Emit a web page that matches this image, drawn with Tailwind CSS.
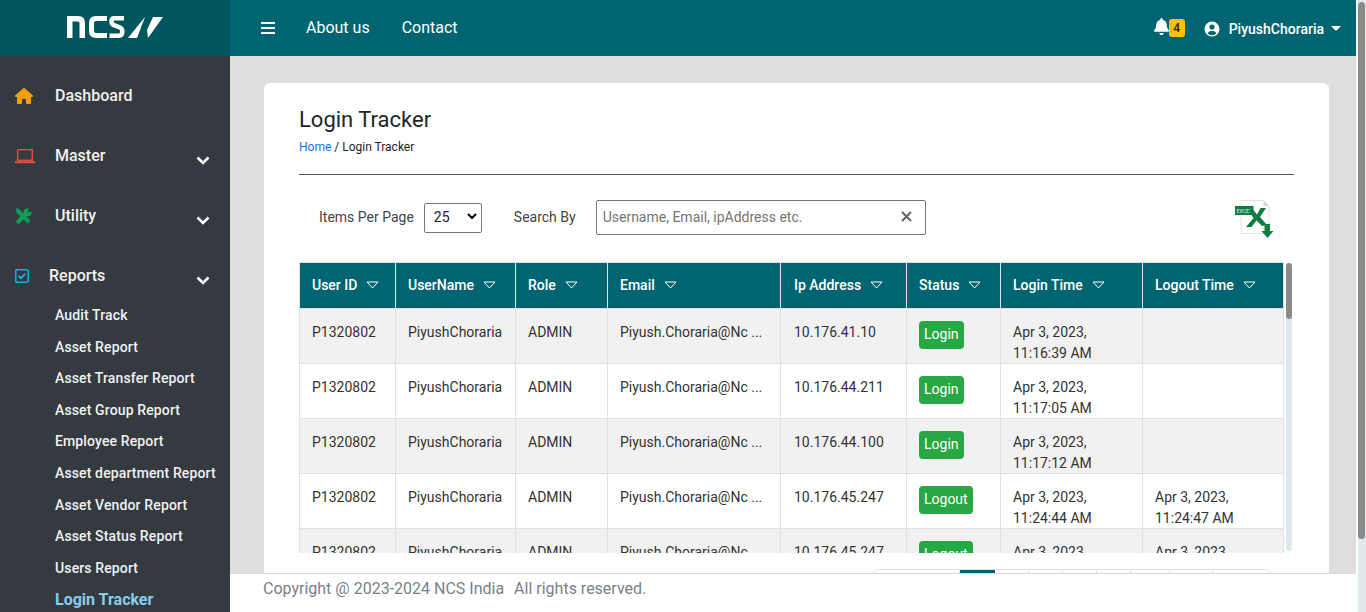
<!DOCTYPE html>
<html>
<head>
<meta charset="utf-8">
<script src="https://cdn.jsdelivr.net/npm/@tailwindcss/browser@4"></script>
<title>Login Tracker</title>
</head>
<body class="h-[612px] w-[1366px] overflow-hidden bg-white font-['Roboto',sans-serif] text-[#212529]">
<div class="flex h-[612px]">
  <!-- sidebar -->
  <aside class="w-[230px] shrink-0 bg-[#343a40] text-[#f1f1f1]">
    <div class="flex h-[56px] items-center justify-center bg-[#00565f]">
      <svg width="98" height="24" viewBox="0 0 98 24" class="-mt-[2px]" fill="none" stroke="#fff">
        <path d="M3.750 23V3.750H12Q16.250 3.750 16.250 8V23" stroke-width="5.500"/>
        <path d="M41 3.500H30Q25.500 3.500 25.500 8V16Q25.500 20.500 30 20.500H41" stroke-width="5"/>
        <path d="M58 3.250H48Q45.500 3.250 45.500 6.500Q45.500 9.500 48.500 10.300L54 12.500Q56.300 13.500 56.300 16.500Q56.300 20.750 53 20.750H43.500" stroke-width="4.500"/>
        <path d="M62 23L79 2L71 23Z" fill="#fff" stroke="none"/>
        <path d="M97 2H87L81 15L82 23Z" fill="#fff" stroke="none"/>
      </svg>
    </div>
    <nav class="pt-[10px] text-base font-medium">
      <div class="flex h-[60px] items-center pl-[15px]">
        <svg width="18" height="16" viewBox="0 0 576 512" fill="#f59e0b" class="mr-[22px]"><path d="M575.800 255.500c0 18-15 32.100-32 32.100h-32l.7 160.200c0 2.700-.2 5.400-.5 8.100V472c0 22.100-17.900 40-40 40H456c-1.100 0-2.200 0-3.300-.1-1.400.1-2.800.1-4.200.1H416 392c-22.100 0-40-17.900-40-40V448 384c0-17.700-14.300-32-32-32H256c-17.700 0-32 14.300-32 32v64 24c0 22.100-17.900 40-40 40H160 128.100c-1.500 0-3-.1-4.500-.2-1.200.1-2.400.2-3.600.2H104c-22.100 0-40-17.900-40-40V360c0-.9 0-1.900.1-2.800V287.600H32c-18 0-32-14-32-32.100 0-9 3-17 10-24L266.400 8c7-7 15-8 22-8s15 2 21 7L564.800 231.500c8 7 12 15 11 24z"/></svg>
        <span>Dashboard</span>
      </div>
      <div class="relative flex h-[60px] items-center pl-[15px]">
        <svg width="20" height="16" viewBox="0 0 20 16" fill="none" stroke="#dc4c3e" stroke-width="1.500" class="mr-[20px]"><rect x="2.700" y="1.700" width="14.600" height="10.600"/><path d="M0 14.200H20" stroke-width="2.200"/></svg>
        <span>Master</span>
        <svg width="14" height="9" viewBox="0 0 14 9" fill="none" stroke="#fff" stroke-width="2.500" class="absolute left-[196px] top-[30px]"><path d="M1.500 1.500L7 7L12.500 1.500"/></svg>
      </div>
      <div class="relative flex h-[60px] items-center pl-[15px]">
        <svg width="17" height="17" viewBox="0 0 17 17" fill="none" class="mr-[23px]">
          <path d="M2.500 2.500L14 14" stroke="#0f9d58" stroke-width="4"/>
          <path d="M1 0L5 1.500L5.500 5L1.500 5.500Z" fill="#0f9d58"/>
          <path d="M12 5L3.500 13.500" stroke="#0f9d58" stroke-width="4.500" stroke-linecap="round"/>
          <circle cx="12.500" cy="4.500" r="4" fill="#0f9d58"/>
          <path d="M12.500 4.500L14 0H18V3Z" fill="#343a40"/>
        </svg>
        <span>Utility</span>
        <svg width="14" height="9" viewBox="0 0 14 9" fill="none" stroke="#fff" stroke-width="2.500" class="absolute left-[196px] top-[30px]"><path d="M1.500 1.500L7 7L12.500 1.500"/></svg>
      </div>
      <div class="relative flex h-[60px] items-center pl-[15px]">
        <svg width="14" height="14" viewBox="0 0 14 14" fill="none" class="mr-[20px]"><rect x="0.750" y="0.750" width="12.500" height="12.500" rx="1" stroke="#0fb4e6" stroke-width="1.500"/><path d="M3.800 7L6 9.200L10.300 4.800" stroke="#0fb4e6" stroke-width="1.800"/></svg>
        <span>Reports</span>
        <svg width="14" height="9" viewBox="0 0 14 9" fill="none" stroke="#fff" stroke-width="2.500" class="absolute left-[196px] top-[30px]"><path d="M1.500 1.500L7 7L12.500 1.500"/></svg>
      </div>
      <ul class="-mt-[6px] pl-[55px] text-sm leading-[31.600px] tracking-[0.13px]">
        <li>Audit Track</li>
        <li>Asset Report</li>
        <li>Asset Transfer Report</li>
        <li>Asset Group Report</li>
        <li>Employee Report</li>
        <li>Asset department Report</li>
        <li>Asset Vendor Report</li>
        <li>Asset Status Report</li>
        <li>Users Report</li>
        <li class="text-base leading-[31.600px] font-bold tracking-normal text-[#87ceeb]">Login Tracker</li>
      </ul>
    </nav>
  </aside>

  <!-- right column -->
  <div class="flex w-[1126px] shrink-0 flex-col">
    <header class="flex h-[56px] shrink-0 items-center bg-[#006570] text-white">
      <svg width="14" height="12" viewBox="0 0 14 12" fill="#fff" class="ml-[31px]"><rect width="14" height="2" rx="0.500"/><rect y="5" width="14" height="2" rx="0.500"/><rect y="10" width="14" height="2" rx="0.500"/></svg>
      <span class="ml-[31px] text-base">About us</span>
      <span class="ml-[32px] text-base">Contact</span>
      <div class="ml-auto mr-[15px] mt-[1px] flex items-center">
        <svg width="15" height="17" viewBox="0 0 448 512" fill="#fff" class="-mt-[5px]"><path d="M224 0c-17.700 0-32 14.300-32 32V51.200C119 66 64 130.600 64 208v18.800c0 47-17.300 92.400-48.500 127.600l-7.400 8.300c-8.400 9.400-10.400 22.900-5.300 34.400S19.400 416 32 416H416c12.600 0 24-7.400 29.200-18.900s3.100-25-5.300-34.400l-7.400-8.300C401.300 319.200 384 273.900 384 226.800V208c0-77.400-55-142-128-156.800V32c0-17.700-14.300-32-32-32zm45.300 493.300c12-12 18.700-28.300 18.700-45.300H224 160c0 17 6.700 33.300 18.700 45.300s28.300 18.700 45.300 18.700s33.300-6.700 45.300-18.700z"/></svg>
        <span class="-mt-[1px] flex h-[18px] w-[16px] items-center justify-center rounded-[3px] bg-[#ffc107] text-xs font-medium text-[#212529]">4</span>
        <svg width="16" height="16" viewBox="0 0 16 16" class="ml-[19px]"><circle cx="8" cy="8" r="7.500" fill="#fff"/><circle cx="8" cy="6" r="2.600" fill="#006570"/><path d="M3.500 12.300C4.500 10.500 6 10 8 10S11.500 10.500 12.500 12.300C11.300 13.500 9.800 14.200 8 14.200S4.700 13.500 3.500 12.300Z" fill="#006570"/></svg>
        <span class="ml-[9px] text-sm font-medium">PiyushChoraria</span>
        <svg width="10" height="5" viewBox="0 0 10 5" fill="#fff" class="ml-[7px]"><path d="M0 0H10L5 5Z"/></svg>
      </div>
    </header>

    <main class="min-h-0 flex-1 overflow-hidden bg-[#dedede] pl-[34px] pr-[27px] pt-[27px]">
      <section class="h-[600px] rounded-[6px] bg-white pl-[35px] pr-[35px]">
        <h1 class="pt-[23px] text-[22px] leading-[28px] text-[#212529]">Login Tracker</h1>
        <p class="mt-[6px] text-xs leading-[14px]"><span class="text-[#0d6efd]">Home</span> / Login Tracker</p>
        <div class="mt-[20px] border-t border-[#555]"></div>

        <div class="relative flex h-[87px] items-center pb-[2px] pl-[20px] text-sm text-[#444]">
          <span class="-mt-[2px]">Items Per Page</span>
          <span class="ml-[10px] flex h-[30px] w-[58px] items-center justify-between rounded-[2px] border border-[#767676] pb-[2px] pl-[9px] pr-[4px] text-[#212529]">25
            <svg width="10" height="7" viewBox="0 0 10 7" fill="none" stroke="#000" stroke-width="2"><path d="M1 1L5 5L9 1"/></svg>
          </span>
          <span class="-mt-[2px] ml-[32px]">Search By</span>
          <span class="ml-[20px] flex h-[35px] w-[330px] items-center justify-between rounded-[2px] border border-[#767676] pb-[2px] pl-[6px] pr-[13px] text-[#757575]">Username, Email, ipAddress etc.
            <svg width="11" height="11" viewBox="0 0 11 11" fill="none" stroke="#666" stroke-width="2"><path d="M1 1L10 10M10 1L1 10"/></svg>
          </span>
          <svg width="40" height="40" viewBox="0 0 40 40" class="absolute left-[935px] top-[24px]">
            <path d="M7 1.500H29.500L35 7V34.500H7Z" fill="#fff" stroke="#e4e4e4" stroke-width="1"/>
            <path d="M29.500 1.500V7H35Z" fill="#d5d5d5"/>
            <rect x="1" y="7" width="18.500" height="9" fill="#107c41"/>
            <text x="2.500" y="13.500" font-size="5.200" font-family="Roboto" fill="#dff0e6">EXCEL</text>
            <path d="M12 28L19.500 19L14 11H19.500L23 15.500L26.500 9H32L26 18L33 26L28 27L22.500 21.500L17.500 28Z" fill="#107c41"/>
            <path d="M30.500 25H36V32H39.500L33.500 39L27.500 32H30.500Z" fill="#107c41"/>
          </svg>
        </div>

        <div class="flex h-[291px] items-start">
          <div class="h-[291px] w-[985px] shrink-0 overflow-hidden">
            <table class="w-[984px] table-fixed border-collapse text-sm">
              <colgroup><col class="w-[96px]"><col class="w-[120px]"><col class="w-[92px]"><col class="w-[173px]"><col class="w-[126px]"><col class="w-[94px]"><col class="w-[142px]"><col class="w-[141px]"></colgroup>
              <thead class="bg-[#006570] font-medium text-white">
                <tr class="h-[46px]">
                  <th class="border border-[#dee2e6] pb-[2px] pl-[12px] text-left font-medium"><span class="inline-flex items-center">User ID<svg width="13" height="8" viewBox="0 0 13 8" fill="none" stroke="#fff" class="ml-[9px]"><path d="M1 1H12L6.500 7Z"/></svg></span></th>
                  <th class="border border-[#dee2e6] pb-[2px] pl-[12px] text-left font-medium"><span class="inline-flex items-center">UserName<svg width="13" height="8" viewBox="0 0 13 8" fill="none" stroke="#fff" class="ml-[9px]"><path d="M1 1H12L6.500 7Z"/></svg></span></th>
                  <th class="border border-[#dee2e6] pb-[2px] pl-[12px] text-left font-medium"><span class="inline-flex items-center">Role<svg width="13" height="8" viewBox="0 0 13 8" fill="none" stroke="#fff" class="ml-[9px]"><path d="M1 1H12L6.500 7Z"/></svg></span></th>
                  <th class="border border-[#dee2e6] pb-[2px] pl-[12px] text-left font-medium"><span class="inline-flex items-center">Email<svg width="13" height="8" viewBox="0 0 13 8" fill="none" stroke="#fff" class="ml-[9px]"><path d="M1 1H12L6.500 7Z"/></svg></span></th>
                  <th class="border border-[#dee2e6] pb-[2px] pl-[13px] text-left font-medium"><span class="inline-flex items-center">Ip Address<svg width="13" height="8" viewBox="0 0 13 8" fill="none" stroke="#fff" class="ml-[9px]"><path d="M1 1H12L6.500 7Z"/></svg></span></th>
                  <th class="border border-[#dee2e6] pb-[2px] pl-[12px] text-left font-medium"><span class="inline-flex items-center">Status<svg width="13" height="8" viewBox="0 0 13 8" fill="none" stroke="#fff" class="ml-[9px]"><path d="M1 1H12L6.500 7Z"/></svg></span></th>
                  <th class="border border-[#dee2e6] pb-[2px] pl-[12px] text-left font-medium"><span class="inline-flex items-center">Login Time<svg width="13" height="8" viewBox="0 0 13 8" fill="none" stroke="#fff" class="ml-[9px]"><path d="M1 1H12L6.500 7Z"/></svg></span></th>
                  <th class="border border-[#dee2e6] pb-[2px] pl-[12px] text-left font-medium"><span class="inline-flex items-center">Logout Time<svg width="13" height="8" viewBox="0 0 13 8" fill="none" stroke="#fff" class="ml-[9px]"><path d="M1 1H12L6.500 7Z"/></svg></span></th>
                </tr>
              </thead>
              <tbody class="leading-[21px] text-[#333]">
                <tr class="h-[55px] bg-[#f1f1f1] align-top">
                  <td class="border border-[#dee2e6] px-[12px] pt-[13px]">P1320802</td><td class="border border-[#dee2e6] px-[12px] pt-[13px]">PiyushChoraria</td><td class="border border-[#dee2e6] px-[12px] pt-[13px]">ADMIN</td><td class="border border-[#dee2e6] px-[12px] pt-[13px] whitespace-nowrap">Piyush.Choraria@Nc ...</td><td class="border border-[#dee2e6] pl-[13px] pr-[11px] pt-[13px]">10.176.41.10</td>
                  <td class="border border-[#dee2e6] px-[12px] pt-[12px]"><span class="inline-block h-[28px] rounded-[4px] bg-[#28a745] px-[5px] leading-[26px] text-white">Login</span></td>
                  <td class="border border-[#dee2e6] px-[12px] pt-[13px]"><div class="-mb-[2px]">Apr 3, 2023,<br>11:16:39 AM</div></td><td class="border border-[#dee2e6] px-[12px] pt-[13px]"></td>
                </tr>
                <tr class="h-[55px] bg-white align-top">
                  <td class="border border-[#dee2e6] px-[12px] pt-[13px]">P1320802</td><td class="border border-[#dee2e6] px-[12px] pt-[13px]">PiyushChoraria</td><td class="border border-[#dee2e6] px-[12px] pt-[13px]">ADMIN</td><td class="border border-[#dee2e6] px-[12px] pt-[13px] whitespace-nowrap">Piyush.Choraria@Nc ...</td><td class="border border-[#dee2e6] pl-[13px] pr-[11px] pt-[13px]">10.176.44.211</td>
                  <td class="border border-[#dee2e6] px-[12px] pt-[12px]"><span class="inline-block h-[28px] rounded-[4px] bg-[#28a745] px-[5px] leading-[26px] text-white">Login</span></td>
                  <td class="border border-[#dee2e6] px-[12px] pt-[13px]"><div class="-mb-[2px]">Apr 3, 2023,<br>11:17:05 AM</div></td><td class="border border-[#dee2e6] px-[12px] pt-[13px]"></td>
                </tr>
                <tr class="h-[55px] bg-[#f1f1f1] align-top">
                  <td class="border border-[#dee2e6] px-[12px] pt-[13px]">P1320802</td><td class="border border-[#dee2e6] px-[12px] pt-[13px]">PiyushChoraria</td><td class="border border-[#dee2e6] px-[12px] pt-[13px]">ADMIN</td><td class="border border-[#dee2e6] px-[12px] pt-[13px] whitespace-nowrap">Piyush.Choraria@Nc ...</td><td class="border border-[#dee2e6] pl-[13px] pr-[11px] pt-[13px]">10.176.44.100</td>
                  <td class="border border-[#dee2e6] px-[12px] pt-[12px]"><span class="inline-block h-[28px] rounded-[4px] bg-[#28a745] px-[5px] leading-[26px] text-white">Login</span></td>
                  <td class="border border-[#dee2e6] px-[12px] pt-[13px]"><div class="-mb-[2px]">Apr 3, 2023,<br>11:17:12 AM</div></td><td class="border border-[#dee2e6] px-[12px] pt-[13px]"></td>
                </tr>
                <tr class="h-[55px] bg-white align-top">
                  <td class="border border-[#dee2e6] px-[12px] pt-[13px]">P1320802</td><td class="border border-[#dee2e6] px-[12px] pt-[13px]">PiyushChoraria</td><td class="border border-[#dee2e6] px-[12px] pt-[13px]">ADMIN</td><td class="border border-[#dee2e6] px-[12px] pt-[13px] whitespace-nowrap">Piyush.Choraria@Nc ...</td><td class="border border-[#dee2e6] pl-[13px] pr-[11px] pt-[13px]">10.176.45.247</td>
                  <td class="border border-[#dee2e6] px-[12px] pt-[12px]"><span class="inline-block h-[28px] rounded-[4px] bg-[#28a745] px-[5px] leading-[26px] text-white">Logout</span></td>
                  <td class="border border-[#dee2e6] px-[12px] pt-[13px]"><div class="-mb-[2px]">Apr 3, 2023,<br>11:24:44 AM</div></td><td class="border border-[#dee2e6] px-[12px] pt-[13px]"><div class="-mb-[2px]">Apr 3, 2023,<br>11:24:47 AM</div></td>
                </tr>
                <tr class="h-[55px] bg-[#f1f1f1] align-top">
                  <td class="border border-[#dee2e6] px-[12px] pt-[13px]">P1320802</td><td class="border border-[#dee2e6] px-[12px] pt-[13px]">PiyushChoraria</td><td class="border border-[#dee2e6] px-[12px] pt-[13px]">ADMIN</td><td class="border border-[#dee2e6] px-[12px] pt-[13px] whitespace-nowrap">Piyush.Choraria@Nc ...</td><td class="border border-[#dee2e6] pl-[13px] pr-[11px] pt-[13px]">10.176.45.247</td>
                  <td class="border border-[#dee2e6] px-[12px] pt-[12px]"><span class="inline-block h-[28px] rounded-[4px] bg-[#28a745] px-[5px] leading-[26px] text-white">Logout</span></td>
                  <td class="border border-[#dee2e6] px-[12px] pt-[13px]"><div class="-mb-[2px]">Apr 3, 2023,<br>11:25:01 AM</div></td><td class="border border-[#dee2e6] px-[12px] pt-[13px]"><div class="-mb-[2px]">Apr 3, 2023,<br>11:25:04 AM</div></td>
                </tr>
              </tbody>
            </table>
          </div>
          <div class="ml-[2px] mt-[1px] h-[288px] w-[6px] rounded-[3px] bg-[#dfe8ea]"><div class="h-[56px] rounded-[3px] bg-[#8a8c89]"></div></div>
        </div>

        <div class="ml-[574px] mt-[16px] flex h-[30px] w-[398px] rounded-t-[5px] border border-[#dee2e6]">
          <span class="w-[86px] border-r border-[#dee2e6]"></span>
          <span class="w-[35px] bg-[#006570]"></span>
          <span class="w-[34px] border-r border-[#dee2e6]"></span>
          <span class="w-[34px] border-r border-[#dee2e6]"></span>
          <span class="w-[34px] border-r border-[#dee2e6]"></span>
          <span class="w-[34px] border-r border-[#dee2e6]"></span>
          <span class="w-[39px] border-r border-[#dee2e6]"></span>
          <span class="w-[43px] border-r border-[#dee2e6]"></span>
        </div>
      </section>
    </main>

    <footer class="h-[39px] shrink-0 border-t border-[#d8d8e0] bg-white pl-[33px] pt-[5px] text-base leading-[20px] text-[#78818a]">Copyright @ 2023-2024 NCS India<span class="ml-[10px]">All rights reserved.</span></footer>
  </div>

  <!-- page scrollbar -->
  <div class="ml-[2px] h-[612px] w-[8px] bg-[#dfe8ea]"><div class="mt-[2px] h-[537px] w-[7px] rounded-[4px] bg-[#8a8c89]"></div></div>
</div>
</body>
</html>
